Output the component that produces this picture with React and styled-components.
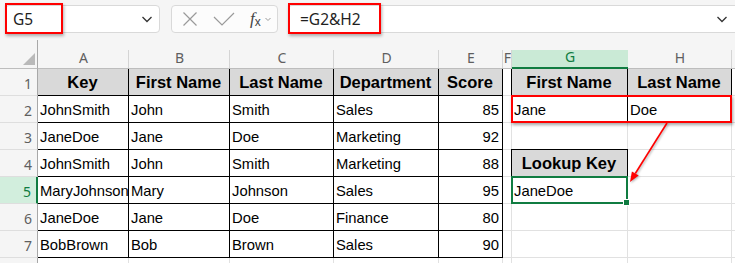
import styled, { createGlobalStyle } from "styled-components";

const GlobalStyle = createGlobalStyle`
  html, body {
    margin: 0;
    padding: 0;
    background: #fff;
    overflow: hidden;
  }
`;

const Page = styled.div`
  width: 735px;
  height: 263px;
  overflow: hidden;
  background: #f5f5f5;
`;

const Toolbar = styled.div`
  display: flex;
  align-items: flex-start;
  height: 40px;
  padding: 5px 0 0 5px;
  box-sizing: border-box;
  gap: 10px;
  font-family: "Noto Sans", "Open Sans", sans-serif;
`;

const Field = styled.div`
  position: relative;
  display: flex;
  align-items: center;
  height: 28px;
  box-sizing: border-box;
  background: #fff;
  border: 1px solid #d9d9d9;
  border-radius: 4px;
  font-size: 15.5px;
  color: #1f1f1f;
`;

const NameBox = styled(Field)`
  width: 155px;
  padding: 0 6px 0 7px;
  justify-content: space-between;
`;

const FxGroup = styled(Field)`
  width: 107px;
  margin-left: 1px;
  padding: 0 6px 0 10px;
  gap: 15px;
  background: #fcfcfc;
`;

const FormulaBar = styled(Field)`
  flex: 1;
  padding: 0 7px 0 11px;
  justify-content: space-between;
  border-right: none;
  border-radius: 4px 0 0 4px;
`;

const Highlight = styled.div`
  position: absolute;
  top: -3px;
  left: -1px;
  width: ${(p) => p.$w}px;
  height: 31px;
  box-sizing: border-box;
  border: 2px solid #f00;
  box-shadow: 1px 2px 3px rgba(0, 0, 0, 0.3);
  pointer-events: none;
`;

const Fx = styled.span`
  font-family: "Liberation Serif", serif;
  font-style: italic;
  font-size: 17px;
  color: #444;
  sub {
    font-size: 12px;
    font-style: normal;
    font-family: "Liberation Sans", sans-serif;
    vertical-align: -2px;
  }
`;

const Sheet = styled.div`
  display: grid;
  grid-template-columns: 38px 91px 101px 104px 105px 64px 9px 116px 104px 1fr;
  grid-template-rows: 29px repeat(8, 27px);
`;

const Placed = styled.div`
  grid-row: ${(p) => p.$r};
  grid-column: ${(p) => p.$c};
  box-sizing: border-box;
  min-width: 0;
`;

const ColHead = styled(Placed)`
  position: relative;
  display: flex;
  align-items: flex-end;
  justify-content: center;
  padding-bottom: 1px;
  font-family: "Noto Sans", "Open Sans", sans-serif;
  font-size: 14px;
  line-height: 18px;
  color: ${(p) => (p.$active ? "#107c41" : "#5f5f5f")};
  background: ${(p) => (p.$active ? "#caead6" : "transparent")};
  margin-top: ${(p) => (p.$active ? "10px" : "0")};
  border-bottom: ${(p) => (p.$active ? "2px solid #107c41" : "1px solid #bdbdbd")};
  &::after {
    content: "";
    position: absolute;
    right: 0;
    bottom: 0;
    width: 1px;
    height: 18px;
    background: ${(p) => (p.$active ? "transparent" : "#d4d4d4")};
  }
`;

const Corner = styled(Placed)`
  position: relative;
  border-right: 1px solid #a8a8a8;
  border-bottom: 1px solid #bdbdbd;
  &::after {
    content: "";
    position: absolute;
    right: 2px;
    bottom: 3px;
    width: 12px;
    height: 12px;
    background: #b9b9b9;
    clip-path: polygon(100% 0, 100% 100%, 0 100%);
  }
`;

const RowNum = styled(Placed)`
  display: flex;
  align-items: center;
  justify-content: flex-end;
  padding: 3px 5px 0 0;
  font-family: "Noto Sans", "Open Sans", sans-serif;
  font-size: 14px;
  color: ${(p) => (p.$active ? "#107c41" : "#5f5f5f")};
  background: ${(p) => (p.$active ? "#d2eedd" : "#f5f5f5")};
  border-right: ${(p) => (p.$active ? "2px solid #107c41" : "1px solid #a8a8a8")};
  border-bottom: 1px solid #dedede;
`;

const Cell = styled(Placed)`
  display: flex;
  align-items: center;
  justify-content: ${(p) =>
    p.$align === "right" ? "flex-end" : p.$align === "center" ? "center" : "flex-start"};
  padding: 1px 3px 0 2px;
  overflow: hidden;
  white-space: nowrap;
  font-family: "Liberation Sans", Arial, sans-serif;
  font-size: ${(p) => (p.$head ? "16.5px" : "14.8px")};
  font-weight: ${(p) => (p.$head ? 700 : 400)};
  color: #000;
  background: ${(p) => (p.$head ? "#d9d9d9" : "#fff")};
  border-right: 1px solid ${(p) => (p.$boxed ? "#000" : "#e1e1e1")};
  border-bottom: 1px solid ${(p) => (p.$boxed ? "#000" : "#e1e1e1")};
  box-shadow: ${(p) => p.$edge || "none"};
`;

const RedFrame = styled(Placed)`
  margin: -1px 0 0 -1px;
  border: 2px solid #f00;
  box-shadow: 1px 2px 3px rgba(0, 0, 0, 0.35);
  pointer-events: none;
`;

const Selection = styled(Placed)`
  position: relative;
  margin: -1px 0 0 -1px;
  border: 2px solid #107c41;
  pointer-events: none;
  &::after {
    content: "";
    position: absolute;
    right: -4px;
    bottom: -4px;
    width: 5px;
    height: 5px;
    background: #107c41;
    border: 1px solid #fff;
  }
`;

const ArrowLayer = styled(Placed)`
  pointer-events: none;
  svg {
    display: block;
    overflow: visible;
  }
`;

const Chevron = ({ size = 12, color = "#333" }) => (
  <svg width={size} height={size} viewBox="0 0 12 12">
    <path d="M1.5 4l4.5 4.5 4.5-4.5" fill="none" stroke={color} strokeWidth="1.3" />
  </svg>
);

const headers = ["Key", "First Name", "Last Name", "Department", "Score"];
const rows = [
  ["JohnSmith", "John", "Smith", "Sales", 85],
  ["JaneDoe", "Jane", "Doe", "Marketing", 92],
  ["JohnSmith", "John", "Smith", "Marketing", 88],
  ["MaryJohnson", "Mary", "Johnson", "Sales", 95],
  ["JaneDoe", "Jane", "Doe", "Finance", 80],
  ["BobBrown", "Bob", "Brown", "Sales", 90],
];

// right-hand block, per sheet row: [G, H]
const side = {
  1: [{ v: "First Name", head: true }, { v: "Last Name", head: true }],
  2: [{ v: "Jane" }, { v: "Doe" }],
  4: [{ v: "Lookup Key", head: true, top: true }, null],
  5: [{ v: "JaneDoe" }, null],
};

const letters = ["A", "B", "C", "D", "E", "F", "G", "H", ""];

const edge = (left, top) => {
  const s = [];
  if (left) s.push("-1px 0 0 #000");
  if (top) s.push("0 -1px 0 #000");
  if (left && top) s.push("-1px -1px 0 #000");
  return s.join(", ") || undefined;
};

const renderRow = (n) => {
  const r = n + 1;
  const cells = [
    <RowNum key="num" $r={r} $c={1} $active={n === 5}>
      {n < 8 ? n : ""}
    </RowNum>,
  ];
  const table = n === 1 ? headers : rows[n - 2];
  for (let c = 0; c < 5; c++) {
    const v = table ? table[c] : "";
    cells.push(
      <Cell
        key={c}
        $r={r}
        $c={c + 2}
        $head={n === 1}
        $boxed={!!table}
        $align={n === 1 ? "center" : c === 4 ? "right" : "left"}
      >
        {v}
      </Cell>
    );
  }
  cells.push(<Cell key="F" $r={r} $c={7} />);
  const s = side[n] || [null, null];
  s.forEach((item, i) =>
    cells.push(
      <Cell
        key={"s" + i}
        $r={r}
        $c={8 + i}
        $head={item && item.head}
        $boxed={!!item}
        $align={item && item.head ? "center" : "left"}
        $edge={item ? edge(i === 0, item.top) : undefined}
      >
        {item ? item.v : ""}
      </Cell>
    )
  );
  cells.push(<Cell key="rest" $r={r} $c={10} />);
  return cells;
};

export default function App() {
  return (
    <Page>
      <GlobalStyle />
      <Toolbar>
        <NameBox>
          <span>G5</span>
          <Chevron />
          <Highlight $w={58} />
        </NameBox>
        <FxGroup>
          <svg width="16" height="16" viewBox="0 0 16 16">
            <path d="M1.5 1.5l13 13M14.5 1.5l-13 13" stroke="#9a9a9a" strokeWidth="1.2" />
          </svg>
          <svg width="22" height="14" viewBox="0 0 22 14">
            <path d="M1 5l8 8L21 1" fill="none" stroke="#9a9a9a" strokeWidth="1.2" />
          </svg>
          <Fx>
            f<sub>x</sub>
          </Fx>
          <svg width="6" height="6" viewBox="0 0 6 6" style={{ marginLeft: -11 }}>
            <path d="M0.5 2l2.5 2.5 2.5-2.5" fill="none" stroke="#9a9a9a" strokeWidth="1" />
          </svg>
        </FxGroup>
        <FormulaBar>
          <span>=G2&amp;H2</span>
          <Chevron />
          <Highlight $w={93} />
        </FormulaBar>
      </Toolbar>
      <Sheet>
        <Corner $r={1} $c={1} />
        {letters.map((l, i) => (
          <ColHead key={i} $r={1} $c={i + 2} $active={l === "G"}>
            {l}
          </ColHead>
        ))}
        {[1, 2, 3, 4, 5, 6, 7, 8].map((n) => renderRow(n))}
        <RedFrame $r={3} $c="8 / 10" />
        <Selection $r={6} $c={8} />
        <ArrowLayer $r="3 / 7" $c="8 / 10">
          <svg width="220" height="108" viewBox="0 0 220 108">
            <g style={{ filter: "drop-shadow(1px 1px 1px rgba(0,0,0,0.3))" }}>
              <line x1="155" y1="27" x2="123.3" y2="77.5" stroke="#f00" strokeWidth="1.6" />
              <polygon points="118,86 126.7,79.6 119.9,75.4" fill="#f00" />
            </g>
          </svg>
        </ArrowLayer>
      </Sheet>
    </Page>
  );
}
